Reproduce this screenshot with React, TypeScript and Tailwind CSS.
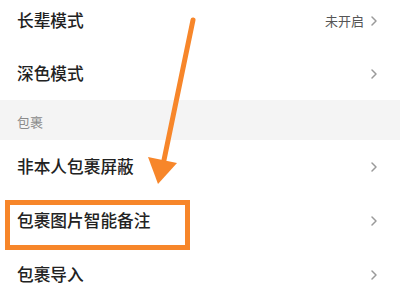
import React from 'react';

const FONT = { fontFamily: '"Noto Sans CJK SC", "Noto Sans", sans-serif' };

const Chevron: React.FC = () => (
  <svg width="8" height="12" viewBox="0 0 8 12" className="ml-[6px]">
    <path d="M2 2 L6 6 L2 10" fill="none" stroke="#9a9a9a" strokeWidth="1.5" strokeLinecap="round" strokeLinejoin="round" />
  </svg>
);

interface RowProps {
  label: string;
  value?: string;
  className?: string;
}

const Row: React.FC<RowProps> = ({ label, value, className = '' }) => (
  <div className={`flex items-center justify-between pl-[17px] pr-[22px] bg-white ${className}`}>
    <span className="text-[16.7px] font-medium text-[#222222]">{label}</span>
    <div className="flex items-center">
      {value && <span className="text-[13px] text-[#555555]">{value}</span>}
      <Chevron />
    </div>
  </div>
);

export default function App() {
  return (
    <div className="relative w-[400px] h-[302px] overflow-hidden bg-white" style={FONT}>
      <div className="flex flex-col -mt-[6px]">
        <Row label="长辈模式" value="未开启" className="h-[53px]" />
        <Row label="深色模式" className="h-[53px]" />
        <div className="h-[40px] bg-[#f4f4f4] flex items-end pl-[17px] pb-[9px]">
          <span className="text-[13px] text-[#8a8a8a]">包裹</span>
        </div>
        <Row label="非本人包裹屏蔽" className="h-[54px]" />
        <Row label="包裹图片智能备注" className="h-[54px]" />
        <Row label="包裹导入" className="h-[54px]" />
      </div>

      {/* annotation: highlight box */}
      <div className="absolute left-[5px] top-[200px] w-[185px] h-[50px] border-[5px] border-[#f7862a]" />

      {/* annotation: arrow */}
      <svg className="absolute left-0 top-0" width="400" height="302" viewBox="0 0 400 302">
        <line x1="193" y1="20" x2="164" y2="160" stroke="#f7862a" strokeWidth="5" strokeLinecap="round" />
        <polygon points="148,157 177,163 158,184" fill="#f7862a" />
      </svg>
    </div>
  );
}
